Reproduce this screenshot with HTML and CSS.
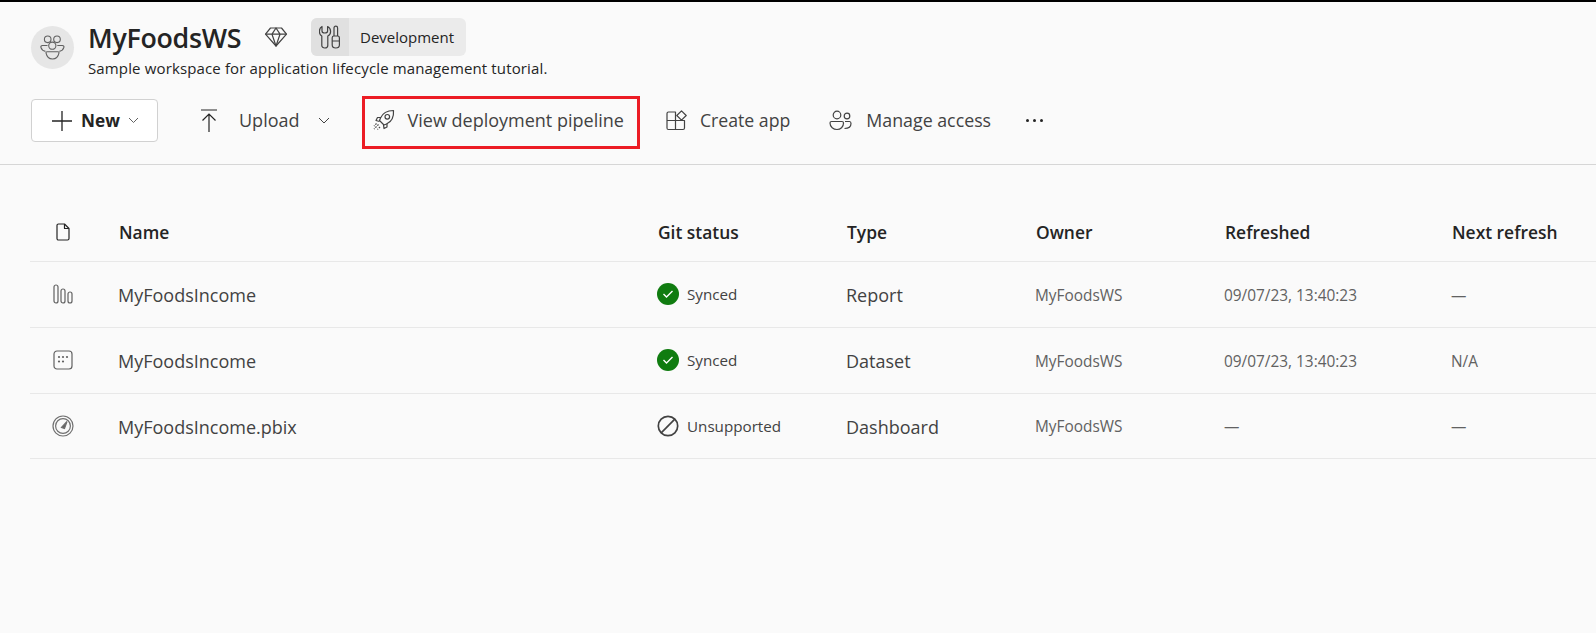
FILE: index.html
```html
<!DOCTYPE html>
<html lang="en">
<head>
    <meta charset="UTF-8">
    <meta name="viewport" content="width=device-width, initial-scale=1.0">
    <title>MyFoodsWS</title>
    <link rel="stylesheet" href="styles.css">
</head>
<body>
    <header class="ws-head">
        <div class="avatar">
            <svg width="25" height="25" viewBox="0 0 25 25" fill="none" stroke="#616161" stroke-width="1.1">
                <circle cx="7.7" cy="4.3" r="3.3"/>
                <circle cx="17" cy="4.3" r="3.3"/>
                <circle cx="12.3" cy="10.7" r="3.6"/>
                <path d="M7.5 10.5H2.4C1.2 10.5 0.6 11.4 0.9 12.4C1.6 14.6 3.3 16 5.4 16.4"/>
                <path d="M17.3 10.5H22.4C23.6 10.5 24.2 11.4 23.9 12.4C23.2 14.6 21.5 16 19.4 16.4"/>
                <path d="M7 16.7H18C18.7 16.7 19.2 17.2 19 17.9C18.2 21.8 15.6 24 12.5 24C9.4 24 6.8 21.8 6 17.9C5.8 17.2 6.3 16.7 7 16.7Z"/>
            </svg>
        </div>
        <div class="ws-info">
            <div class="ws-title-row">
                <h1 class="ws-title">MyFoodsWS</h1>
                <svg class="diamond" width="24" height="22" viewBox="0 0 24 22" fill="none" stroke="#424242" stroke-width="1.2" stroke-linejoin="round">
                    <path d="M6.5 2H17.5L22.5 8.2L12 20L1.5 8.2Z"/>
                    <path d="M1.5 8.2H22.5M8 8.2L12 2L16 8.2L12 20Z"/>
                </svg>
                <div class="stage-pill">
                    <span class="stage-icon">
                        <svg width="22" height="24" viewBox="0 0 22 24" fill="none" stroke="#424242" stroke-width="1.2" stroke-linejoin="round">
                            <path d="M3 1.5V6C3 7.2 3.9 8 5.8 8C7.7 8 8.6 7.2 8.6 6V1.5C10.4 2.5 11.6 4.3 11.6 6.5C11.6 8.6 10.5 10.2 8.8 11V20.5C8.8 22 7.5 23 5.8 23C4.1 23 2.8 22 2.8 20.5V11C1.1 10.2 0.4 8.6 0.4 6.5C0.4 4.3 1.2 2.5 3 1.5Z"/>
                            <path d="M15 11V3C15 2 15.7 1.2 16.8 1.2C17.9 1.2 18.6 2 18.6 3V11"/>
                            <path d="M15 11H18.6C19.6 11 20.4 11.8 20.4 12.8V20C20.4 22 18.9 23 16.8 23C14.7 23 13.2 22 13.2 20V12.8C13.2 11.8 14 11 15 11Z"/>
                            <path d="M13.2 16H20.4"/>
                        </svg>
                    </span>
                    <span class="stage-label">Development</span>
                </div>
            </div>
            <p class="ws-desc">Sample workspace for application lifecycle management tutorial.</p>
        </div>
    </header>

    <nav class="toolbar">
        <button class="new-btn" type="button">
            <svg width="22" height="22" viewBox="0 0 22 22" stroke="#242424" stroke-width="1.3"><path d="M11 1V21M1 11H21"/></svg>
            <span>New</span>
            <svg class="chev-small" width="11" height="7" viewBox="0 0 11 7" fill="none" stroke="#616161"><path d="M1 1L5.5 5.5L10 1"/></svg>
        </button>
        <div class="tool tool-upload">
            <svg width="18" height="24" viewBox="0 0 18 24" fill="none" stroke="#242424" stroke-width="1.2"><path d="M1 1H17M9 23V5M2.5 11.5L9 5L15.5 11.5"/></svg>
            <span class="tool-text">Upload</span>
            <svg class="chev" width="12" height="7" viewBox="0 0 12 7" fill="none" stroke="#424242"><path d="M1 1L6 6L11 1"/></svg>
        </div>
        <div class="tool tool-pipeline">
            <svg width="23" height="23" viewBox="0 0 23 23" fill="none" stroke="#424242" stroke-width="1.2" stroke-linejoin="round">
                <path d="M21.5 1.5C15.5 1.5 10.5 4.5 8.5 9L7.5 11.5L12 16L14.5 15C19 13 22 8 21.5 1.5Z"/>
                <circle cx="15.3" cy="7.8" r="2.3"/>
                <path d="M9 8.5H5.5L4 11.5L7.5 12.5M15 14.5V18L12 19.5L11.5 16"/>
                <path d="M6.5 15.5L2 20M8 18L5.5 20.5M4.5 14.5L2 17" stroke-dasharray="1.6 1.2"/>
            </svg>
            <span class="tool-text">View deployment pipeline</span>
        </div>
        <div class="tool tool-app">
            <svg width="21" height="21" viewBox="0 0 21 21" fill="none" stroke="#424242" stroke-width="1.2" stroke-linejoin="round">
                <path d="M1 3.5C1 2.5 1.5 2 2.5 2H9.5V19.5H2.5C1.5 19.5 1 19 1 18V3.5Z"/>
                <path d="M1 10.5H18.5V18C18.5 19 18 19.5 17 19.5H9.5"/>
                <path d="M15.5 0.8L20.2 5.5L15.5 10.2L10.8 5.5Z"/>
            </svg>
            <span class="tool-text">Create app</span>
        </div>
        <div class="tool tool-access">
            <svg width="23" height="21" viewBox="0 0 23 21" fill="none" stroke="#424242" stroke-width="1.2">
                <circle cx="8" cy="5" r="3.8"/>
                <circle cx="18" cy="6" r="2.8"/>
                <path d="M2.5 11.5H13C14 11.5 14.5 12 14.5 13C14.5 17 11.5 19.5 8 19.5C4.5 19.5 1 17 1 13C1 12 1.5 11.5 2.5 11.5Z"/>
                <path d="M15.5 18.5C19 18.5 22 17 22 13.5C22 12.5 21.5 11.5 20.5 11.5H16"/>
            </svg>
            <span class="tool-text">Manage access</span>
        </div>
        <div class="tool-more"><i></i><i></i><i></i></div>
    </nav>

    <section class="items">
        <div class="row row-head">
            <div class="cell-icon">
                <svg width="14" height="18" viewBox="0 0 14 18" fill="none" stroke="#242424" stroke-width="1.2" stroke-linejoin="round"><path d="M2.5 1H8.5L13 5.5V15.5C13 16.4 12.4 17 11.5 17H2.5C1.6 17 1 16.4 1 15.5V2.5C1 1.6 1.6 1 2.5 1Z"/><path d="M8.5 1V5.5H13"/></svg>
            </div>
            <div>Name</div>
            <div>Git status</div>
            <div>Type</div>
            <div>Owner</div>
            <div>Refreshed</div>
            <div>Next refresh</div>
        </div>

        <div class="row">
            <div class="cell-icon">
                <svg width="20" height="20" viewBox="0 0 20 20" fill="none" stroke="#616161" stroke-width="1.2"><rect x="1" y="1" width="4" height="18" rx="2"/><rect x="8" y="5" width="4" height="14" rx="2"/><rect x="15" y="8" width="4" height="11" rx="2"/></svg>
            </div>
            <div class="cell-name">MyFoodsIncome</div>
            <div class="cell-status">
                <span class="dot-ok"><svg width="12" height="10" viewBox="0 0 12 10" fill="none" stroke="#fff" stroke-width="1.4"><path d="M1.5 5L4.5 8L10.5 2"/></svg></span>
                <span>Synced</span>
            </div>
            <div class="cell-name">Report</div>
            <div class="cell-small">MyFoodsWS</div>
            <div class="cell-small">09/07/23, 13:40:23</div>
            <div class="cell-small">—</div>
        </div>

        <div class="row">
            <div class="cell-icon">
                <svg width="20" height="20" viewBox="0 0 20 20" fill="#616161"><rect x="1" y="1" width="18" height="18" rx="3" fill="none" stroke="#616161" stroke-width="1.2"/><circle cx="6" cy="7" r="1.1"/><circle cx="10" cy="7" r="1.1"/><circle cx="14" cy="7" r="1.1"/><circle cx="6" cy="11.5" r="1.1"/><circle cx="10" cy="11.5" r="1.1"/></svg>
            </div>
            <div class="cell-name">MyFoodsIncome</div>
            <div class="cell-status">
                <span class="dot-ok"><svg width="12" height="10" viewBox="0 0 12 10" fill="none" stroke="#fff" stroke-width="1.4"><path d="M1.5 5L4.5 8L10.5 2"/></svg></span>
                <span>Synced</span>
            </div>
            <div class="cell-name">Dataset</div>
            <div class="cell-small">MyFoodsWS</div>
            <div class="cell-small">09/07/23, 13:40:23</div>
            <div class="cell-small">N/A</div>
        </div>

        <div class="row">
            <div class="cell-icon">
                <svg width="22" height="22" viewBox="0 0 22 22" fill="none" stroke="#707070" stroke-width="1.2"><circle cx="11" cy="11" r="10"/><circle cx="11" cy="11" r="7.4"/><path d="M9.5 12.5L15 6.5L12.5 13.5Z" fill="#616161"/></svg>
            </div>
            <div class="cell-name">MyFoodsIncome.pbix</div>
            <div class="cell-status">
                <svg width="22" height="22" viewBox="0 0 22 22" fill="none" stroke="#424242" stroke-width="1.7"><circle cx="11" cy="11" r="9.7"/><path d="M4.2 17.8L17.8 4.2"/></svg>
                <span>Unsupported</span>
            </div>
            <div class="cell-name">Dashboard</div>
            <div class="cell-small">MyFoodsWS</div>
            <div class="cell-small">—</div>
            <div class="cell-small">—</div>
        </div>
    </section>
</body>
</html>
```

FILE: styles.css
```css
html, body {
    margin: 0;
    height: 100%;
}
body {
    box-sizing: border-box;
    border-top: 2px solid #000;
    background-color: #fafafa;
    color: #242424;
    font-family: "Open Sans", "Noto Sans", sans-serif;
    overflow: hidden;
}
svg {
    display: block;
    flex: none;
}

/* workspace header */
.ws-head {
    display: flex;
    align-items: center;
    gap: 14px;
    padding: 16px 0 0 31px;
}
.avatar {
    width: 43px;
    height: 43px;
    border-radius: 50%;
    background-color: #e6e6e6;
    display: flex;
    align-items: center;
    justify-content: center;
    margin-top: -2px;
}
.ws-title-row {
    display: flex;
    align-items: center;
    height: 38px;
}
.ws-title {
    margin: 0;
    font-size: 26.8px;
    font-weight: 600;
    letter-spacing: -0.3px;
    width: 176px;
    white-space: nowrap;
}
.diamond {
    margin-right: 23px;
}
.stage-pill {
    display: flex;
    height: 38px;
    background-color: #ebebeb;
    border-radius: 6px;
    overflow: hidden;
    font-size: 15px;
}
.stage-icon {
    width: 38px;
    background-color: #e0e0e0;
    display: flex;
    align-items: center;
    justify-content: center;
}
.stage-label {
    width: 117px;
    padding-left: 11px;
    box-sizing: border-box;
    line-height: 38px;
}
.ws-desc {
    margin: 2px 0 0;
    font-size: 15px;
    letter-spacing: 0.14px;
    line-height: 20px;
    white-space: nowrap;
}

/* toolbar */
.toolbar {
    display: flex;
    align-items: center;
    height: 43px;
    margin-top: 21px;
    padding: 0 0 22px 31px;
    border-bottom: 1px solid #d6d6d6;
    font-size: 18px;
    color: #424242;
}
.new-btn {
    display: flex;
    align-items: center;
    width: 127px;
    height: 43px;
    box-sizing: border-box;
    padding: 0 0 0 19px;
    background-color: #fff;
    border: 1px solid #d1d1d1;
    border-radius: 4px;
    font-family: inherit;
    font-size: 17.2px;
    font-weight: 700;
    color: #242424;
}
.new-btn span {
    margin-left: 8px;
}
.chev-small {
    margin-left: 8px;
}
.tool {
    display: flex;
    align-items: center;
}
.tool-text {
    padding-bottom: 2px;
    white-space: nowrap;
}
.tool-upload {
    margin-left: 42px;
    gap: 21px;
}
.tool-upload .chev {
    margin-left: -3px;
}
.tool-pipeline {
    position: relative;
    margin-left: 42px;
    gap: 13px;
}
/* red callout drawn over the toolbar */
.tool-pipeline::after {
    content: "";
    position: absolute;
    left: -10px;
    right: -16px;
    top: -12px;
    bottom: -15px;
    border: 3px solid #ec1c24;
}
.tool-app {
    margin-left: 42px;
    gap: 13px;
    font-size: 17.7px;
}
.tool-access {
    margin-left: 39px;
    gap: 14px;
    font-size: 17.8px;
}
.tool-more {
    display: flex;
    gap: 4px;
    margin-left: 35px;
}
.tool-more i {
    width: 3px;
    height: 3px;
    border-radius: 50%;
    background-color: #242424;
}

/* items table */
.items {
    margin: 38px 0 0 30px;
}
.row {
    display: grid;
    grid-template-columns: 88px 539px 189px 189px 189px 227px 1fr;
    align-items: center;
    height: 65.8px;
    box-sizing: border-box;
    border-bottom: 1px solid #e8e8e8;
}
.row-head {
    height: 59px;
    font-size: 17.4px;
    font-weight: 600;
    color: #242424;
}
.row-head > div:not(.cell-icon) {
    padding-left: 1px;
}
.cell-icon {
    display: flex;
    justify-content: center;
    width: 66px;
}
.cell-name {
    padding-top: 2px;
    font-size: 18px;
    color: #424242;
    white-space: nowrap;
}
.cell-small {
    padding-top: 2px;
    font-size: 15.4px;
    color: #616161;
    white-space: nowrap;
}
.cell-status {
    display: flex;
    align-items: center;
    gap: 8px;
    font-size: 15.2px;
    color: #424242;
}
.dot-ok {
    width: 22px;
    height: 22px;
    border-radius: 50%;
    background-color: #107c10;
    display: flex;
    align-items: center;
    justify-content: center;
}
```
